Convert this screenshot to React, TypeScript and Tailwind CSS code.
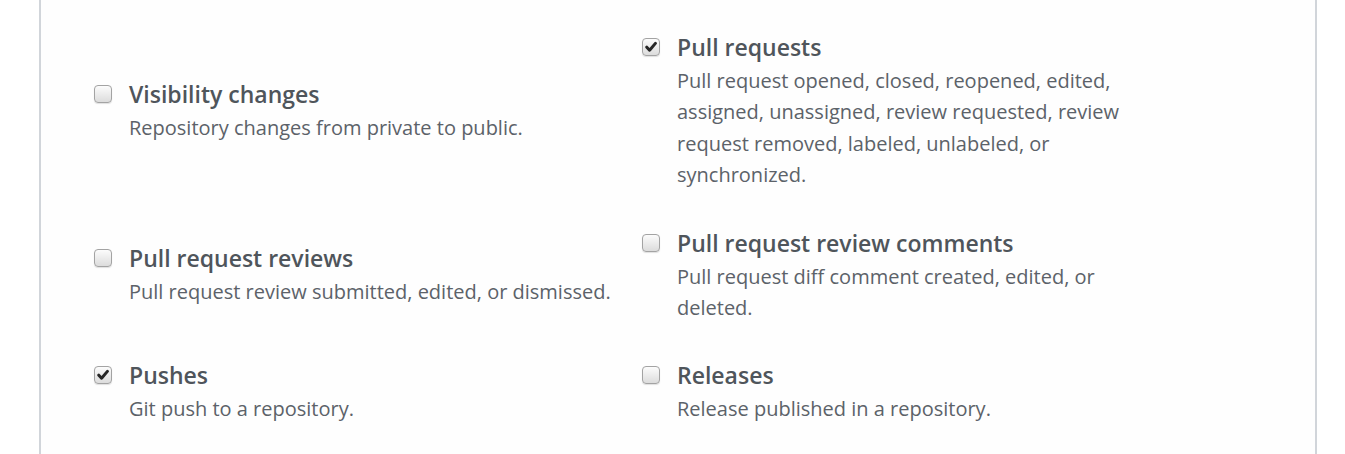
import React from "react";

type Hook = { title: string; description: string; checked?: boolean };

const rows: [Hook, Hook][] = [
  [
    { title: "Visibility changes", description: "Repository changes from private to public." },
    {
      title: "Pull requests",
      description:
        "Pull request opened, closed, reopened, edited, assigned, unassigned, review requested, review request removed, labeled, unlabeled, or synchronized.",
      checked: true,
    },
  ],
  [
    { title: "Pull request reviews", description: "Pull request review submitted, edited, or dismissed." },
    { title: "Pull request review comments", description: "Pull request diff comment created, edited, or deleted." },
  ],
  [
    { title: "Pushes", description: "Git push to a repository.", checked: true },
    { title: "Releases", description: "Release published in a repository." },
  ],
];

const Checkbox = ({ checked }: { checked?: boolean }) => (
  <span className="mt-[7px] flex h-[18px] w-[18px] shrink-0 items-center justify-center rounded-[4px] border border-[#a3a3a3] bg-gradient-to-b from-[#fcfcfc] to-[#dcdcdc] shadow-[0_1px_1px_rgba(0,0,0,0.12)]">
    {checked && (
      <svg viewBox="0 0 12 12" className="h-[12px] w-[12px]">
        <path d="M1.8 6.2 L4.6 9.2 L10.4 2.4" fill="none" stroke="#262626" strokeWidth="3" strokeLinecap="round" strokeLinejoin="round" />
      </svg>
    )}
  </span>
);

const HookItem = ({ hook }: { hook: Hook }) => (
  <label className="flex gap-[17px]">
    <Checkbox checked={hook.checked} />
    <div>
      <div className="text-[23px] font-semibold leading-[32px] text-[#4f555b]">{hook.title}</div>
      <p className="mt-[2px] max-w-[488px] text-[20px] leading-[31.4px] text-[#5c6269]">{hook.description}</p>
    </div>
  </label>
);

export default function App() {
  return (
    <div className="h-[454px] bg-white pl-[39px] pr-[28px]" style={{ fontFamily: '"Open Sans", "Noto Sans", sans-serif' }}>
      <div className="h-full border-x-2 border-[#d1d5da] bg-[#fefefe] pl-[53px] pt-[31px]">
        <div className="grid grid-cols-[548px_1fr] items-center gap-y-[36px]">
          {rows.map((row, i) => (
            <React.Fragment key={i}>
              <HookItem hook={row[0]} />
              <HookItem hook={row[1]} />
            </React.Fragment>
          ))}
        </div>
      </div>
    </div>
  );
}
